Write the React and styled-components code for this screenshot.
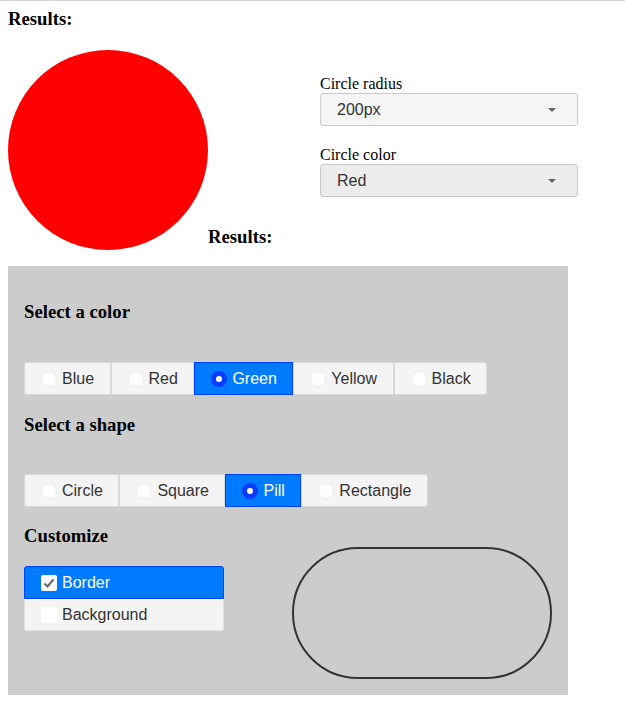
import React, { useState } from 'react';
import styled, { createGlobalStyle } from 'styled-components';

const GlobalStyle = createGlobalStyle`
  body {
    margin: 0;
    background: #ffffff;
    font-family: "Liberation Serif", "Times New Roman", serif;
  }
`

const Page = styled.div`
  border-top: 1px solid #d6d6d6;
  padding: 7px 8px 20px;
`
const Title = styled.div`
  font-family: "Liberation Serif", serif;
  font-weight: bold;
  font-size: 18.72px;
  line-height: 21px;
  color: #000;
  margin-bottom: ${p => p.$mb || 0}px;
`
const TopRow = styled.div`
  display: flex;
`
const Circle = styled.div`
  width: 200px;
  height: 200px;
  border-radius: 50%;
  background: ${p => p.$color};
  flex-shrink: 0;
`
const Side = styled.div`
  display: flex;
  flex-direction: column;
  justify-content: space-between;
  height: 200px;
`
const Controls = styled.div`
  margin-left: 112px;
  padding-top: 25px;
  display: flex;
  flex-direction: column;
  gap: 20px;
`
const Field = styled.div`
  display: flex;
  flex-direction: column;
`
const Label = styled.div`
  font-size: 16px;
  line-height: 18px;
  color: #000;
`
const SelectBox = styled.div`
  box-sizing: border-box;
  width: 258px;
  height: 33px;
  border: 1px solid #cacaca;
  border-radius: 3px;
  background: ${p => (p.$active ? '#ececec' : '#f5f5f5')};
  display: flex;
  align-items: center;
  justify-content: space-between;
  padding: 0 21px 0 16px;
  font-family: "Liberation Sans", Arial, sans-serif;
  font-size: 16px;
  color: #333;
`
const Caret = styled.span`
  width: 0;
  height: 0;
  border-left: 4px solid transparent;
  border-right: 4px solid transparent;
  border-top: 4px solid #666;
`
const Panel = styled.div`
  margin-top: 16px;
  width: 560px;
  box-sizing: border-box;
  background: #cccccc;
  padding: 35px 16px 16px;
`
const Section = styled.div`
  margin-bottom: ${p => p.$mb || 0}px;
`
const Group = styled.div`
  display: flex;
`
const Option = styled.label`
  box-sizing: border-box;
  height: 33px;
  display: flex;
  align-items: center;
  padding: 0 15.5px 0 16px;
  border: 1px solid ${p => (p.$on ? '#0044ff' : '#d9d9d9')};
  border-radius: ${p => (p.$first ? '3px 0 0 3px' : p.$last ? '0 3px 3px 0' : '0')};
  background: ${p => (p.$on ? '#007bff' : '#f4f4f4')};
  color: ${p => (p.$on ? '#ffffff' : '#333333')};
  font-family: "Liberation Sans", Arial, sans-serif;
  font-size: 16px;
  cursor: pointer;
`
const RadioDot = styled.span`
  box-sizing: border-box;
  width: 16px;
  height: 16px;
  border-radius: 50%;
  margin-right: 5px;
  background: #fff;
  border: ${p => (p.$on ? '5px solid #0a3cff' : '1px solid #ececec')};
  flex-shrink: 0;
`
const CustomRow = styled.div`
  display: grid;
  grid-template-columns: 1fr 1fr;
`
const CheckList = styled.div`
  width: 200px;
  margin-top: 20px;
  display: flex;
  flex-direction: column;
`
const CheckItem = styled.label`
  box-sizing: border-box;
  height: ${p => (p.$first ? 33 : 32)}px;
  display: flex;
  align-items: center;
  padding: 0 16px;
  border: 1px solid ${p => (p.$on ? '#0044ff' : '#e2e2e2')};
  border-top: ${p => (p.$first ? undefined : 'none')};
  border-radius: ${p => (p.$first ? '3px 3px 0 0' : '0 0 3px 3px')};
  background: ${p => (p.$on ? '#007bff' : '#f4f4f4')};
  color: ${p => (p.$on ? '#ffffff' : '#333333')};
  font-family: "Liberation Sans", Arial, sans-serif;
  font-size: 16px;
  cursor: pointer;
`
const Box = styled.span`
  box-sizing: border-box;
  width: 16px;
  height: 16px;
  border-radius: 2px;
  background: #fff;
  margin-right: 5px;
  display: flex;
  align-items: center;
  justify-content: center;
  flex-shrink: 0;
`
const ShapeWrap = styled.div`
  display: flex;
  justify-content: flex-end;
  padding-top: 22px;
`
const Shape = styled.div`
  box-sizing: border-box;
  width: 260px;
  height: 132px;
  border: 2px solid #333;
  border-radius: 66px;
`

const colors = ['Blue', 'Red', 'Green', 'Yellow', 'Black']
const shapes = ['Circle', 'Square', 'Pill', 'Rectangle']

const RadioGroup = ({options, value, onChange}) => (
  <Group>
    {options.map((o, i) => (
      <Option key={o} $on={o === value} $first={i === 0} $last={i === options.length - 1} onClick={() => onChange(o)}>
        <RadioDot $on={o === value} />
        {o}
      </Option>
    ))}
  </Group>
)

const Check = ({on}) => (
  <Box>
    {on && (
      <svg width="12" height="12" viewBox="0 0 12 12">
        <path d="M1.5 6.5 L4.5 9.5 L10.5 2.5" fill="none" stroke="#6b6b6b" strokeWidth="2.2" />
      </svg>
    )}
  </Box>
)

const App = () => {
  const [color, setColor] = useState('Green')
  const [shape, setShape] = useState('Pill')
  const [border, setBorder] = useState(true)
  const [bg, setBg] = useState(false)

  return (
    <Page>
      <GlobalStyle />
      <Title $mb={21}>Results:</Title>
      <TopRow>
        <Circle $color="red" />
        <Side>
          <Controls>
            <Field>
              <Label>Circle radius</Label>
              <SelectBox>200px<Caret /></SelectBox>
            </Field>
            <Field>
              <Label>Circle color</Label>
              <SelectBox $active>Red<Caret /></SelectBox>
            </Field>
          </Controls>
          <Title $mb={3}>Results:</Title>
        </Side>
      </TopRow>
      <Panel>
        <Section $mb={19}>
          <Title $mb={40}>Select a color</Title>
          <RadioGroup options={colors} value={color} onChange={setColor} />
        </Section>
        <Section $mb={18}>
          <Title $mb={39}>Select a shape</Title>
          <RadioGroup options={shapes} value={shape} onChange={setShape} />
        </Section>
        <CustomRow>
          <div>
            <Title>Customize</Title>
            <CheckList>
              <CheckItem $first $on={border} onClick={() => setBorder(!border)}>
                <Check on={border} />Border
              </CheckItem>
              <CheckItem $on={bg} onClick={() => setBg(!bg)}>
                <Check on={bg} />Background
              </CheckItem>
            </CheckList>
          </div>
          <ShapeWrap>
            <Shape />
          </ShapeWrap>
        </CustomRow>
      </Panel>
    </Page>
  )
}
export default App;
